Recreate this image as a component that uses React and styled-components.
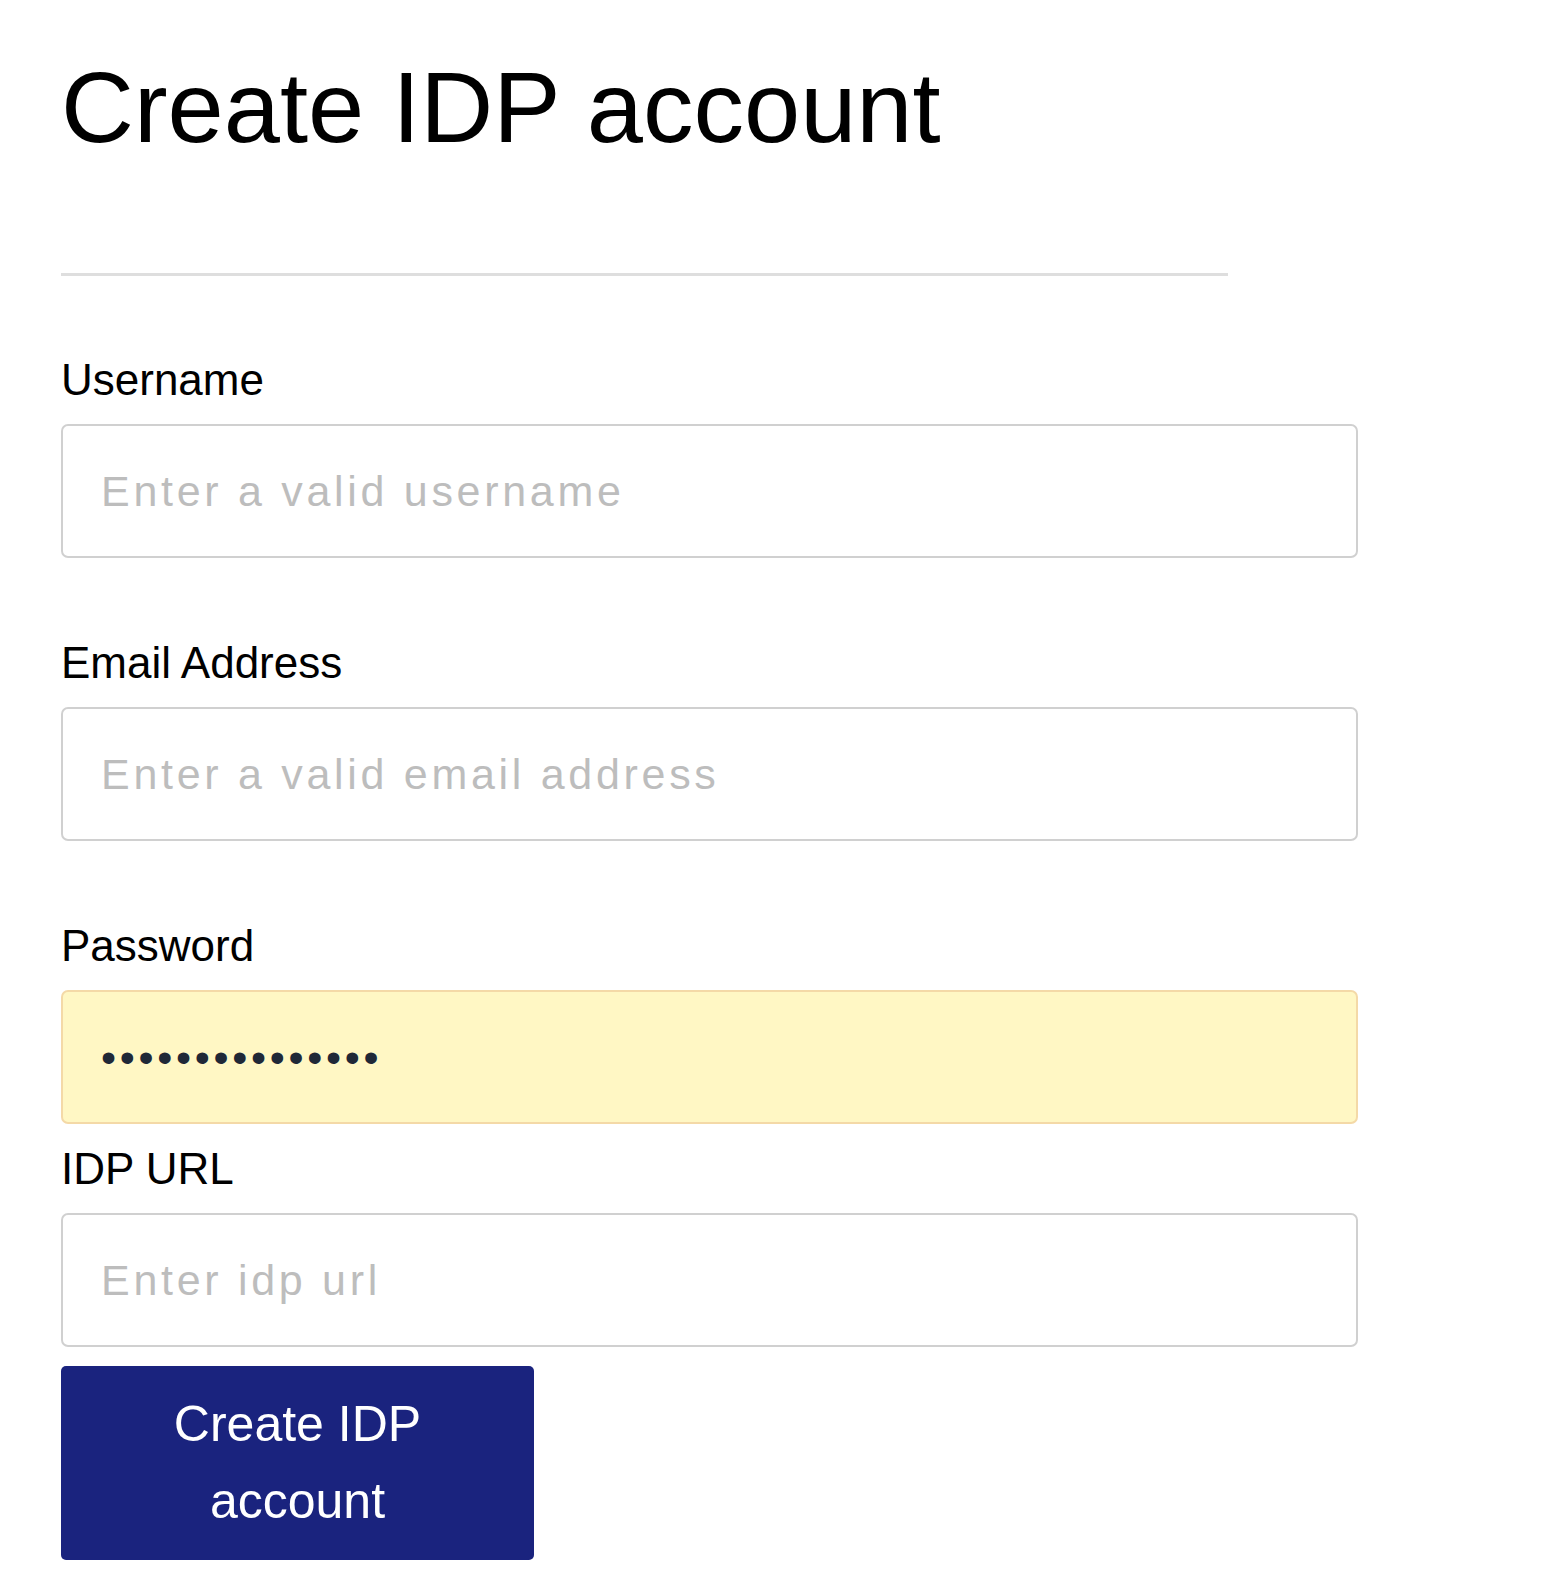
import React from "react";
import styled, { createGlobalStyle } from "styled-components";

const GlobalStyle = createGlobalStyle`
  body {
    margin: 0;
    background: #ffffff;
    font-family: "Liberation Sans", Arial, sans-serif;
    color: #000000;
  }
`;

const Page = styled.div`
  padding: 49px 0 24px 61px;
`;

const FormContainer = styled.div`
  width: 1297px;
`;

const Title = styled.h1`
  margin: 0;
  font-size: 101px;
  font-weight: 400;
  line-height: 116px;
`;

const Divider = styled.hr`
  width: 90%;
  height: 3px;
  margin: 108px 0 79px 0;
  border: 0;
  background: #dedede;
`;

const Field = styled.div`
  display: flex;
  flex-direction: column;
  margin-bottom: ${(props) => props.spacing}px;
`;

const Label = styled.label`
  font-size: 44px;
  line-height: 49px;
  margin-bottom: 20px;
`;

const Input = styled.input`
  box-sizing: border-box;
  width: 100%;
  height: 134px;
  padding: 0 38px;
  border: 2px solid ${(props) => (props.filled ? "#f4d9a7" : "#d0d0d0")};
  border-radius: 7px;
  background: ${(props) => (props.filled ? "#fff7c4" : "#ffffff")};
  color: #1f2837;
  font-family: "Liberation Sans", Arial, sans-serif;
  font-size: 43px;
  letter-spacing: 3.7px;
  outline: none;

  &::placeholder {
    color: #bdbdbd;
  }
`;

const SubmitButton = styled.button`
  box-sizing: border-box;
  width: 473px;
  padding: 20px 30px;
  border: none;
  border-radius: 5px;
  background: #1a237e;
  color: #ffffff;
  font-family: "Liberation Sans", Arial, sans-serif;
  font-size: 50px;
  line-height: 77px;
  text-align: center;
  cursor: pointer;
`;

const fields = [
  { id: "username", label: "Username", type: "text", placeholder: "Enter a valid username", spacing: 80 },
  { id: "email", label: "Email Address", type: "email", placeholder: "Enter a valid email address", spacing: 80 },
  { id: "password", label: "Password", type: "password", value: "passwordpasswor", spacing: 20 },
  { id: "idpUrl", label: "IDP URL", type: "text", placeholder: "Enter idp url", spacing: 19 },
];

const App = () => {
  return (
    <Page>
      <GlobalStyle />
      <FormContainer>
        <Title>Create IDP account</Title>
        <Divider />
        <form onSubmit={(e) => e.preventDefault()}>
          {fields.map((f) => (
            <Field key={f.id} spacing={f.spacing}>
              <Label htmlFor={f.id}>{f.label}</Label>
              <Input
                id={f.id}
                type={f.type}
                placeholder={f.placeholder}
                defaultValue={f.value}
                filled={f.value ? 1 : 0}
              />
            </Field>
          ))}
          <SubmitButton type="submit">Create IDP account</SubmitButton>
        </form>
      </FormContainer>
    </Page>
  );
};

export default App;
